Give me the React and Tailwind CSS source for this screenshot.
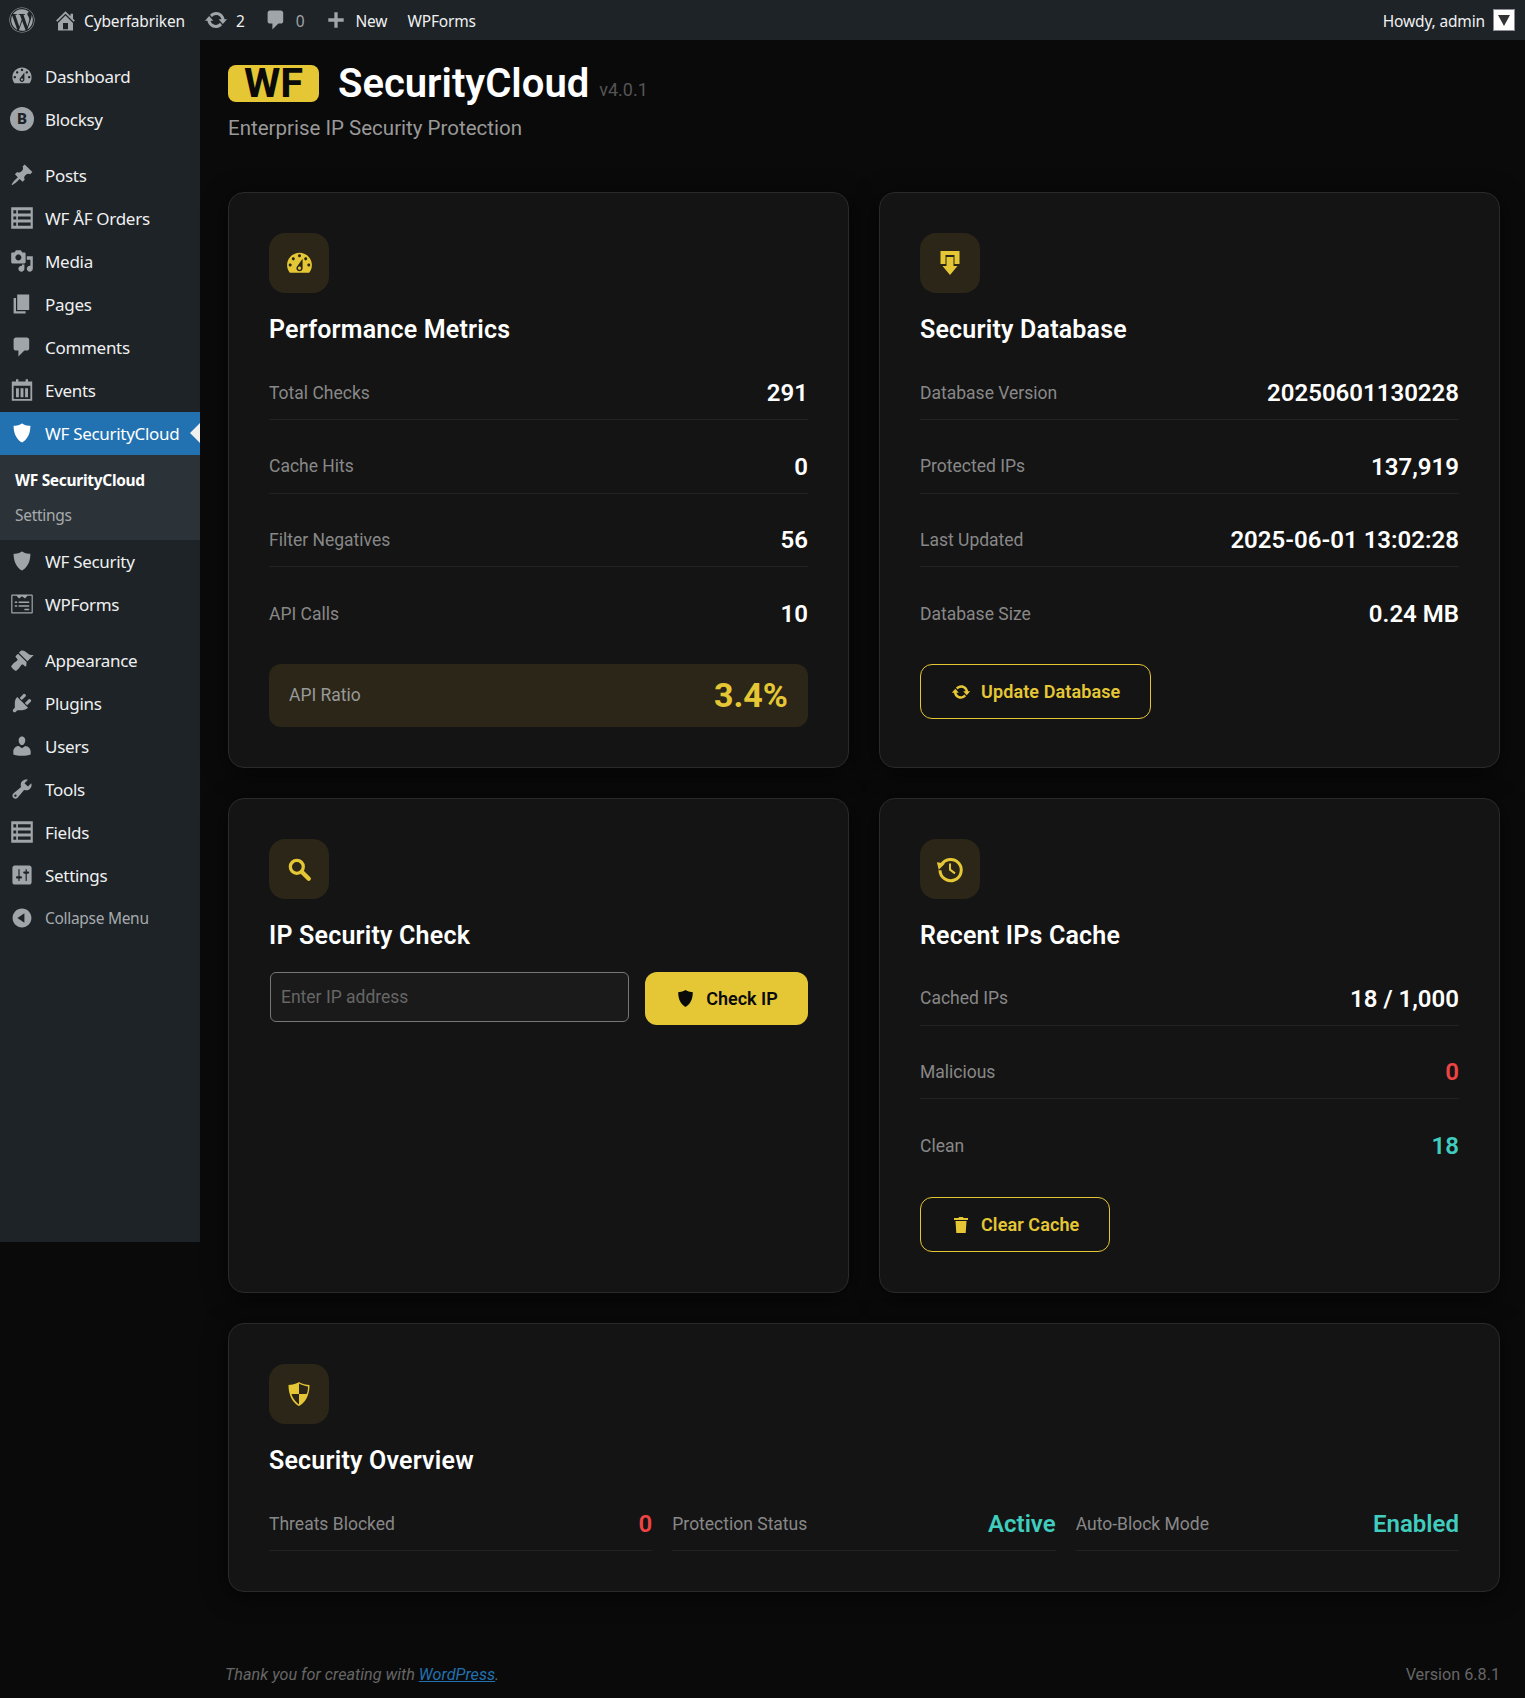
import { FaWordpress } from "react-icons/fa";

const Dash = ({ d, className = "w-6 h-6", rule, box = "0 0 20 20" }) => (
  <svg viewBox={box} className={className} fill="currentColor">
    <path d={d} fillRule={rule} clipRule={rule} />
  </svg>
);

const paths = {
  dashboard:
    "M3.76 16h12.48c1.1-1.37 1.76-3.11 1.76-5 0-4.42-3.58-8-8-8s-8 3.58-8 8c0 1.89.66 3.63 1.76 5zM10 4c.55 0 1 .45 1 1s-.45 1-1 1-1-.45-1-1 .45-1 1-1zM6 6c.55 0 1 .45 1 1s-.45 1-1 1-1-.45-1-1 .45-1 1-1zm8 0c.55 0 1 .45 1 1s-.45 1-1 1-1-.45-1-1 .45-1 1-1zm-5.37 5.55L12 7v6c0 1.1-.9 2-2 2s-2-.9-2-2c0-.57.24-1.08.63-1.45zM4 10c.55 0 1 .45 1 1s-.45 1-1 1-1-.45-1-1 .45-1 1-1zm12 0c.55 0 1 .45 1 1s-.45 1-1 1-1-.45-1-1 .45-1 1-1zm-5 3c0-.55-.45-1-1-1s-1 .45-1 1 .45 1 1 1 1-.45 1-1z",
  post: "M10.44 3.02l1.82-1.82 6.36 6.35-1.83 1.82c-1.05-.68-2.48-.57-3.41.36l-.75.75c-.92.93-1.04 2.35-.35 3.41l-1.83 1.82-2.41-2.41-2.8 2.79c-.42.42-3.38 2.71-3.8 2.29s1.86-3.39 2.28-3.81l2.79-2.79L4.1 9.36l1.83-1.82c1.05.69 2.48.57 3.4-.36l.75-.75c.93-.92 1.05-2.35.36-3.41z",
  list: "M1 1h18v18H1zM2.8 3.6v2.6h2.4V3.6zm3.8 0v2.6h10.6V3.6zM2.8 8.7v2.6h2.4V8.7zm3.8 0v2.6h10.6V8.7zM2.8 13.8v2.6h2.4v-2.6zm3.8 0v2.6h10.6v-2.6z",
  media:
    "M13 11V4c0-.55-.45-1-1-1h-1.67L9 1H5L3.67 3H2c-.55 0-1 .45-1 1v7c0 .55.45 1 1 1h10c.55 0 1-.45 1-1zM7 4.5c1.38 0 2.5 1.12 2.5 2.5S8.38 9.5 7 9.5 4.5 8.38 4.5 7 5.62 4.5 7 4.5zM14 6h5v10.5c0 1.38-1.12 2.5-2.5 2.5S14 17.88 14 16.5s1.12-2.5 2.5-2.5c.17 0 .34.02.5.05V9h-3V6zm-4 8.05V13h2v3.5c0 1.38-1.12 2.5-2.5 2.5S7 17.88 7 16.5 8.12 14 9.5 14c.17 0 .34.02.5.05z",
  page: "M6 15V2h10v13H6zm-1 1h8v2H3V5h2v11z",
  comment: "M5 2h9c1.1 0 2 .9 2 2v7c0 1.1-.9 2-2 2h-2l-5 5v-5H5c-1.1 0-2-.9-2-2V4c0-1.1.9-2 2-2z",
  calendar:
    "M5 1h2v2h6V1h2v2h3.5v16H1.5V3H5zM3 6.5v11h14v-11zM5 8.5h2.4V16H5zm3.8 0h2.4V16H8.8zm3.8 0H15V16h-2.4z",
  shield: "M10 2s3 2 7 2c0 11-7 14-7 14S3 15 3 4c4 0 7-2 7-2z",
  checker: "M10 2s3 2 7 2c0 11-7 14-7 14S3 15 3 4c4 0 7-2 7-2zm0 8h5s1-1 1-5c0 0-5-1-6-2v7H5c1 4 5 7 5 7v-7z",
  forms:
    "M2 2h16c.6 0 1 .4 1 1v14c0 .6-.4 1-1 1H2c-.6 0-1-.4-1-1V3c0-.6.4-1 1-1zm0 1.2v13.6h16V3.2h-3.4L12.5 5.5 10 3.6 7.5 5.5 5.4 3.2zM4 8h2v1.2H4zm3.2 0H16v1.2H7.2zM4 11h2v1.2H4zm3.2 0H16v1.2H7.2zM12 14h4v1.2h-4z",
  brush:
    "M14.48 11.06L7.41 3.99l1.5-1.5c.5-.56 2.3-.47 3.51.32 1.21.8 1.43 1.28 2.91 2.1 1.18.64 2.45 1.26 4.45.85zm-.71.71L6.7 4.7 4.93 6.47c-.39.39-.39 1.02 0 1.41l1.06 1.06c.39.39.39 1.03 0 1.42-.6.6-1.43 1.11-2.21 1.69-.35.26-.7.53-1.01.84-1.34 1.39-1.77 2.25-1.77 2.25s.39 1.3 1.49 2.4 2.4 1.49 2.4 1.49.86-.43 2.25-1.77c.31-.31.58-.66.84-1.01.58-.78 1.09-1.61 1.69-2.21.39-.39 1.03-.39 1.42 0l1.06 1.06c.39.39 1.02.39 1.41 0z",
  plugin:
    "M13.11 4.36L9.87 7.6 8 5.73l3.24-3.24c.35-.34 1.05-.2 1.56.32.52.51.66 1.21.31 1.55zm-8 1.77l.91-1.12 9.01 9.01-1.19.84c-.71.71-2.63 1.16-3.82 1.16H6.14L4.9 17.26c-.59.59-1.54.59-2.12 0-.59-.58-.59-1.53 0-2.12l1.24-1.24v-3.88c0-1.13.4-3.19 1.09-3.89zm7.26 3.97l3.24-3.24c.34-.35 1.04-.21 1.55.31.52.51.66 1.21.31 1.55l-3.24 3.25z",
  users:
    "M10 9.25c-2.27 0-2.73-3.44-2.73-3.44C7 4.02 7.82 2 9.97 2c2.16 0 2.98 2.02 2.71 3.81 0 0-.41 3.44-2.68 3.44zm0 2.57L12.72 10c2.39 0 4.52 2.33 4.52 4.53v2.49s-3.65 1.13-7.24 1.13c-3.65 0-7.24-1.13-7.24-1.13v-2.49c0-2.25 1.94-4.48 4.47-4.48z",
  tools:
    "M16.68 9.77c-1.34 1.34-3.3 1.67-4.95.99l-5.41 6.52c-.99.99-2.59.99-3.58 0s-.99-2.59 0-3.57l6.52-5.42c-.68-1.65-.35-3.61.99-4.95 1.28-1.28 3.12-1.62 4.72-1.06l-2.89 2.89 2.82 2.82 2.86-2.87c.53 1.58.18 3.39-1.08 4.65zM3.81 16.21c.4.39 1.04.39 1.43 0 .4-.4.4-1.04 0-1.43-.39-.4-1.03-.4-1.43 0-.39.39-.39 1.03 0 1.43z",
  settings:
    "M18 16V4c0-1.1-.9-2-2-2H4c-1.1 0-2 .9-2 2v12c0 1.1.9 2 2 2h12c1.1 0 2-.9 2-2zM8 11h1c.55 0 1 .45 1 1s-.45 1-1 1H8v1.5c0 .28-.22.5-.5.5s-.5-.22-.5-.5V13H6c-.55 0-1-.45-1-1s.45-1 1-1h1V5.5c0-.28.22-.5.5-.5s.5.22.5.5V11zm5-2h-1c-.55 0-1-.45-1-1s.45-1 1-1h1V5.5c0-.28.22-.5.5-.5s.5.22.5.5V7h1c.55 0 1 .45 1 1s-.45 1-1 1h-1v5.5c0 .28-.22.5-.5.5s-.5-.22-.5-.5V9z",
  collapse: "M10 2.16c4.33 0 7.84 3.51 7.84 7.84s-3.51 7.84-7.84 7.84S2.16 14.33 2.16 10 5.71 2.16 10 2.16zm2 11.72V6.12L6.18 9.97z",
  update:
    "M10.2 3.28c3.53 0 6.43 2.61 6.92 6h2.08l-3.5 4-3.5-4h2.32c-.45-1.97-2.21-3.45-4.32-3.45-1.45 0-2.73.71-3.54 1.78L4.95 5.66C6.23 4.2 8.11 3.28 10.2 3.28zm-.4 13.44c-3.52 0-6.43-2.61-6.92-6H.8l3.5-4c1.17 1.33 2.33 2.67 3.5 4H5.48c.45 1.97 2.21 3.45 4.32 3.45 1.45 0 2.73-.71 3.54-1.78l1.71 1.95c-1.28 1.46-3.15 2.38-5.25 2.38z",
  home: "M16 8.5l1.53 1.53-1.06 1.06L10 4.62l-6.47 6.47-1.06-1.06L10 2.5l4 4v-2h2v4zm-6-2.46l6 5.99V18H4v-5.97zM12 17v-5H8v5h4z",
  plus: "M17 8.5v3h-5.5V17h-3v-5.5H3v-3h5.5V3h3v5.5z",
  database: "M2.5 0h19v13h-5V4h-9v9h-5zM8.5 6h7v9h4L12 24 4.5 15h4z",
  trash: "M8 2h4l.5 1H17v2H3V3h4.5zM4.5 6h11l-.8 12H5.3z",
};

function BlocksyIcon() {
  return (
    <span className="w-6 h-6 rounded-full bg-[#a0a5aa] flex items-center justify-center text-[15px] font-black leading-none text-[#1d2327] font-['Roboto',sans-serif]">
      B
    </span>
  );
}

function MenuItem({ icon, label, active, dim, rule }) {
  return (
    <div
      className={`relative flex items-center h-[43px] pl-[45px] text-[17px] ${active ? "bg-[#2271b1] text-white" : dim ? "text-[#a7aaad]" : "text-[#f0f0f1]"}`}
    >
      <span className={`absolute left-[10px] top-[9px] ${active ? "text-white" : "text-[#a0a5aa]"}`}>
        {icon === "blocksy" ? <BlocksyIcon /> : <Dash d={paths[icon]} rule={rule} />}
      </span>
      <span className={dim ? "text-[15.5px]" : ""}>{label}</span>
      {active && (
        <span className="absolute right-0 top-[11px] border-y-[10px] border-r-[10px] border-y-transparent border-r-[#f0f0f1]" />
      )}
    </div>
  );
}

function Sidebar() {
  return (
    <aside className="w-[200px] h-[1202px] shrink-0 bg-[#1d2327] pt-[15px] font-['Noto_Sans',sans-serif] tracking-[-0.3px]">
      <MenuItem icon="dashboard" label="Dashboard" />
      <MenuItem icon="blocksy" label="Blocksy" />
      <div className="h-[13px]" />
      <MenuItem icon="post" label="Posts" />
      <MenuItem icon="list" label="WF ÅF Orders" rule="evenodd" />
      <MenuItem icon="media" label="Media" />
      <MenuItem icon="page" label="Pages" />
      <MenuItem icon="comment" label="Comments" />
      <MenuItem icon="calendar" label="Events" rule="evenodd" />
      <MenuItem icon="shield" label="WF SecurityCloud" active />
      <div className="bg-[#2c3338] h-[85px] pl-[15px] pt-[8px] text-[15.5px]">
        <div className="h-[35px] flex items-center font-bold text-white">WF SecurityCloud</div>
        <div className="h-[36px] flex items-center text-[#a7aaad]">Settings</div>
      </div>
      <MenuItem icon="shield" label="WF Security" />
      <MenuItem icon="forms" label="WPForms" rule="evenodd" />
      <div className="h-[13px]" />
      <MenuItem icon="brush" label="Appearance" />
      <MenuItem icon="plugin" label="Plugins" />
      <MenuItem icon="users" label="Users" />
      <MenuItem icon="tools" label="Tools" />
      <MenuItem icon="list" label="Fields" rule="evenodd" />
      <MenuItem icon="settings" label="Settings" />
      <MenuItem icon="collapse" label="Collapse Menu" dim />
    </aside>
  );
}

function TopBar() {
  return (
    <header className="h-10 bg-[#1d2327] flex items-center justify-between pl-[9px] pr-[10px] text-[15.5px] text-[#f0f0f1] font-['Noto_Sans',sans-serif] tracking-[-0.15px]">
      <div className="flex items-center">
        <FaWordpress className="w-[26px] h-[26px] text-[#a0a5aa]" />
        <Dash d={paths.home} className="w-[25px] h-[25px] ml-[18px] text-[#a0a5aa]" />
        <span className="ml-[6px] pt-[3px]">Cyberfabriken</span>
        <Dash d={paths.update} className="w-[24px] h-[24px] ml-[19px] text-[#a0a5aa]" />
        <span className="ml-[8px] pt-[3px]">2</span>
        <Dash d={paths.comment} className="w-[24px] h-[24px] ml-[19px] text-[#a0a5aa]" />
        <span className="ml-[8px] pt-[3px] text-[#a0a5aa]">0</span>
        <Dash d={paths.plus} className="w-[22px] h-[22px] ml-[21px] text-[#a0a5aa]" />
        <span className="ml-[8px] pt-[3px]">New</span>
        <span className="ml-[20px] pt-[3px]">WPForms</span>
      </div>
      <div className="flex items-center">
        <span className="pt-[3px]">Howdy, admin</span>
        <span className="ml-[8px] w-[22px] h-[22px] bg-white border border-[#8c8f94] flex items-center justify-center">
          <svg viewBox="0 0 14 14" className="w-[14px] h-[14px]">
            <path d="M1 2h12L7 13z" fill="#333" />
          </svg>
        </span>
      </div>
    </header>
  );
}

function Card({ icon, title, children, className = "" }) {
  return (
    <section className={`bg-[#141414] border border-[#2a2a2a] rounded-2xl px-[40px] pt-[40px] pb-[40px] shadow-[0_4px_24px_rgba(0,0,0,0.6)] ${className}`}>
      <div className="w-[60px] h-[60px] rounded-2xl bg-[#2b2618] flex items-center justify-center text-[#e5c736]">
        {icon}
      </div>
      <h2 className="mt-[21px] mb-[21px] h-[32px] leading-[32px] text-[25px] tracking-[0.2px] font-semibold text-white">{title}</h2>
      {children}
    </section>
  );
}

function Row({ label, value, color = "text-white", className = "", last }) {
  return (
    <div className={`flex items-center justify-between h-[53px] border-b border-[#232323] ${last ? "" : "mb-[20.5px]"} ${className}`}>
      <span className="text-[17.5px] text-[#888888]">{label}</span>
      <span className={`text-[24px] font-semibold ${color}`}>{value}</span>
    </div>
  );
}

function OutlineButton({ icon, children, className = "" }) {
  return (
    <button className={`h-[55px] px-[30px] flex items-center gap-[10px] border border-[#e5c736] rounded-xl text-[18px] tracking-[0.1px] font-semibold text-[#e5c736] ${className}`}>
      {icon}
      {children}
    </button>
  );
}

export default function App() {
  return (
    <div className="min-h-[1698px] bg-[#0a0a0a] font-['Roboto',sans-serif]">
      <TopBar />
      <div className="flex">
        <Sidebar />
        <main className="flex-1 pl-[28px] pr-[25px]">
          <div className="flex items-center pt-[25px] h-[62px]">
            <span className="w-[91px] h-[37px] rounded-lg bg-[#e5c736] flex items-center justify-center text-[41.5px] font-bold text-[#0a0a0a]">
              WF
            </span>
            <h1 className="ml-[19px] text-[40px] font-semibold text-white">SecurityCloud</h1>
            <span className="ml-[10px] mt-[12px] text-[18px] text-[#555555]">v4.0.1</span>
          </div>
          <p className="mt-[10px] h-[32px] leading-[32px] text-[20.5px] text-[#999999]">Enterprise IP Security Protection</p>

          <div className="mt-[48px] grid grid-cols-2 gap-[30px]">
            <Card
              title="Performance Metrics"
              icon={<Dash d={paths.dashboard} className="w-[31px] h-[31px]" />}
            >
              <Row label="Total Checks" value="291" />
              <Row label="Cache Hits" value="0" />
              <Row label="Filter Negatives" value="56" />
              <Row label="API Calls" value="10" className="border-b-0" last />
              <div className="mt-[23px] h-[63px] rounded-xl bg-[#2b2618] flex items-center justify-between px-5">
                <span className="text-[17.5px] text-[#999999]">API Ratio</span>
                <span className="text-[34px] font-bold text-[#e5c736]">3.4%</span>
              </div>
            </Card>

            <Card
              title="Security Database"
              icon={<Dash d={paths.database} box="0 0 24 24" className="w-[24px] h-[24px]" />}
            >
              <Row label="Database Version" value="20250601130228" />
              <Row label="Protected IPs" value="137,919" />
              <Row label="Last Updated" value="2025-06-01 13:02:28" />
              <Row label="Database Size" value="0.24 MB" className="border-b-0" />
              <div className="flex">
                <OutlineButton className="mt-[3px]" icon={<Dash d={paths.update} className="w-[20px] h-[20px]" />}>Update Database</OutlineButton>
              </div>
            </Card>

            <Card
              title="IP Security Check"
              icon={
                <svg viewBox="0 0 24 24" className="w-[26px] h-[26px]" fill="none" stroke="currentColor">
                  <circle cx="10" cy="10" r="6" strokeWidth="3" />
                  <path d="M14.5 14.5L21 21" strokeWidth="4" strokeLinecap="round" />
                </svg>
              }
            >
              <div className="flex items-start gap-4 -mt-[1px]">
                <input
                  placeholder="Enter IP address"
                  className="ml-[1px] w-[359px] h-[50px] rounded-md border border-[#777777] bg-[#1a1a1a] px-[10px] text-[17.5px] text-white placeholder:text-[#666666] outline-none"
                />
                <button className="w-[163px] h-[53px] rounded-xl bg-[#e5c736] flex items-center justify-center gap-[10px] text-[18px] font-semibold text-[#0a0a0a]">
                  <Dash d={paths.shield} className="w-[21px] h-[21px]" />
                  Check IP
                </button>
              </div>
            </Card>

            <Card
              title="Recent IPs Cache"
              icon={
                <svg viewBox="0 0 24 24" className="w-[30px] h-[30px]" fill="none" stroke="currentColor" strokeWidth="2.4">
                  <path d="M5.2 8.5A8.5 8.5 0 1 1 4 13" />
                  <path d="M1.5 6.5l6.5 1-5 5z" fill="currentColor" stroke="none" />
                  <path d="M12 7.5V12.5l4 3" strokeWidth="1.6" />
                </svg>
              }
            >
              <Row label="Cached IPs" value="18 / 1,000" />
              <Row label="Malicious" value="0" color="text-[#ef4444]" />
              <Row label="Clean" value="18" color="text-[#40ccbe]" className="border-b-0" />
              <div className="flex">
                <OutlineButton className="mt-[4px]" icon={<Dash d={paths.trash} className="w-[20px] h-[20px]" />}>Clear Cache</OutlineButton>
              </div>
            </Card>

            <Card
              className="col-span-2"
              title="Security Overview"
              icon={<Dash d={paths.checker} className="w-[30px] h-[30px]" rule="evenodd" />}
            >
              <div className="grid grid-cols-3 gap-5">
                <Row label="Threats Blocked" value="0" color="text-[#ef4444]" last />
                <Row label="Protection Status" value="Active" color="text-[#40ccbe]" last />
                <Row label="Auto-Block Mode" value="Enabled" color="text-[#40ccbe]" last />
              </div>
            </Card>
          </div>

          <footer className="mt-[71px] flex items-center justify-between text-[16.2px] text-[#666666]">
            <span className="italic -ml-[3px]">
              Thank you for creating with <a className="text-[#2271b1] underline">WordPress</a>.
            </span>
            <span>Version 6.8.1</span>
          </footer>
        </main>
      </div>
    </div>
  );
}
